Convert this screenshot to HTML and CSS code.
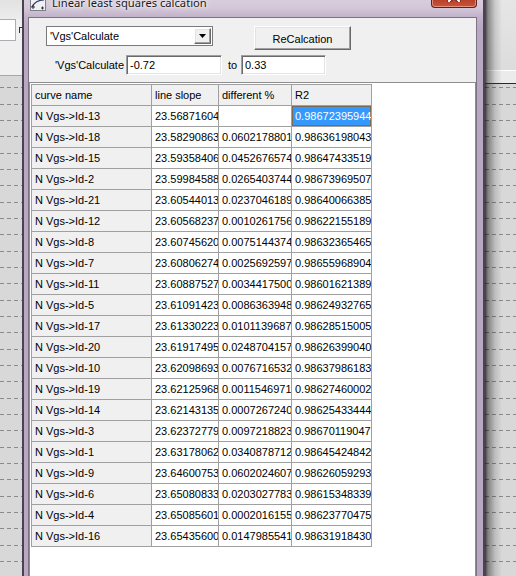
FILE: index.html
```html
<!DOCTYPE html>
<html>
<head>
<meta charset="utf-8">
<title>Linear least squares calcation</title>
<link rel="stylesheet" href="styles.css">
</head>
<body>
<div class="screen">
  <div class="desk-left">
    <div class="dl-top">
      <div class="dl-band"></div>
      <div class="dl-row">
        <div class="dl-field"></div>
        <div class="dl-mark"></div>
      </div>
    </div>
    <div class="dl-sep"></div>
    <div class="dashes dashes-left"></div>
  </div>

  <div class="window">
    <div class="titlebar">
      <svg class="app-icon" width="16" height="16" viewBox="0 0 16 16">
        <rect x="0.5" y="0.5" width="15" height="15" fill="#eef0f4" stroke="#7d7f88"/>
        <rect x="1" y="1" width="14" height="3" fill="#9aa6c4"/>
        <path d="M2 12 C5 6, 9 5, 14 5" fill="none" stroke="#2f3a66" stroke-width="1.2"/>
        <path d="M3 14 L3 10 M1 12 L5 12" stroke="#333" stroke-width="1"/>
        <path d="M11 13 L14 13 M12.5 11.5 L12.5 14.5" stroke="#333" stroke-width="1"/>
      </svg>
      <span class="title">Linear least squares calcation</span>
      <div class="close-btn">
        <svg width="14" height="12" viewBox="0 0 14 12">
          <path d="M2 1 L12 11 M12 1 L2 11" stroke="#5a1a12" stroke-width="4" stroke-linecap="square"/>
          <path d="M2 1 L12 11 M12 1 L2 11" stroke="#ffffff" stroke-width="2.2" stroke-linecap="square"/>
        </svg>
      </div>
    </div>

    <div class="client">
      <div class="row-top">
        <div class="combo">
          <span class="combo-text">'Vgs'Calculate</span>
          <span class="combo-btn">
            <svg width="8" height="5" viewBox="0 0 8 5"><path d="M0 0 H7 L3.5 4 Z" fill="#000"/></svg>
          </span>
        </div>
        <div class="btn">ReCalcation</div>
      </div>

      <div class="row-range">
        <span class="lbl">'Vgs'Calculate</span>
        <div class="field f1">-0.72</div>
        <span class="to">to</span>
        <div class="field f2">0.33</div>
      </div>

      <div class="grid-panel">
        <table class="grid">
          <colgroup><col class="c1"><col class="c2"><col class="c3"><col class="c4"></colgroup>
          <tr><td class="fx">curve name</td><td class="fx">line slope</td><td class="fx">different %</td><td class="fx">R2</td></tr>
          <tr><td class="fx">N Vgs-&gt;Id-13</td><td>23.56871604</td><td></td><td class="sel">0.98672395944</td></tr>
          <tr><td class="fx">N Vgs-&gt;Id-18</td><td>23.58290863</td><td>0.06021788013</td><td>0.98636198043</td></tr>
          <tr><td class="fx">N Vgs-&gt;Id-15</td><td>23.59358406</td><td>0.04526765741</td><td>0.98647433519</td></tr>
          <tr><td class="fx">N Vgs-&gt;Id-2</td><td>23.59984588</td><td>0.02654037441</td><td>0.98673969507</td></tr>
          <tr><td class="fx">N Vgs-&gt;Id-21</td><td>23.60544013</td><td>0.02370461896</td><td>0.98640066385</td></tr>
          <tr><td class="fx">N Vgs-&gt;Id-12</td><td>23.60568237</td><td>0.00102617562</td><td>0.98622155189</td></tr>
          <tr><td class="fx">N Vgs-&gt;Id-8</td><td>23.60745620</td><td>0.00751443741</td><td>0.98632365465</td></tr>
          <tr><td class="fx">N Vgs-&gt;Id-7</td><td>23.60806274</td><td>0.00256925971</td><td>0.98655968904</td></tr>
          <tr><td class="fx">N Vgs-&gt;Id-11</td><td>23.60887527</td><td>0.00344175001</td><td>0.98601621389</td></tr>
          <tr><td class="fx">N Vgs-&gt;Id-5</td><td>23.61091423</td><td>0.00863639481</td><td>0.98624932765</td></tr>
          <tr><td class="fx">N Vgs-&gt;Id-17</td><td>23.61330223</td><td>0.01011396871</td><td>0.98628515005</td></tr>
          <tr><td class="fx">N Vgs-&gt;Id-20</td><td>23.61917495</td><td>0.02487041571</td><td>0.98626399040</td></tr>
          <tr><td class="fx">N Vgs-&gt;Id-10</td><td>23.62098693</td><td>0.00767165321</td><td>0.98637986183</td></tr>
          <tr><td class="fx">N Vgs-&gt;Id-19</td><td>23.62125968</td><td>0.00115469711</td><td>0.98627460002</td></tr>
          <tr><td class="fx">N Vgs-&gt;Id-14</td><td>23.62143135</td><td>0.00072672401</td><td>0.98625433444</td></tr>
          <tr><td class="fx">N Vgs-&gt;Id-3</td><td>23.62372779</td><td>0.00972188231</td><td>0.98670119047</td></tr>
          <tr><td class="fx">N Vgs-&gt;Id-1</td><td>23.63178062</td><td>0.03408787121</td><td>0.98645424842</td></tr>
          <tr><td class="fx">N Vgs-&gt;Id-9</td><td>23.64600753</td><td>0.06020246071</td><td>0.98626059293</td></tr>
          <tr><td class="fx">N Vgs-&gt;Id-6</td><td>23.65080833</td><td>0.02030277831</td><td>0.98615348339</td></tr>
          <tr><td class="fx">N Vgs-&gt;Id-4</td><td>23.65085601</td><td>0.00020161551</td><td>0.98623770475</td></tr>
          <tr><td class="fx">N Vgs-&gt;Id-16</td><td>23.65435600</td><td>0.01479855411</td><td>0.98631918430</td></tr>
        </table>
      </div>
    </div>
  </div>

  <div class="desk-right">
    <div class="dr-top"></div>
    <div class="dr-hl"></div>
    <div class="dr-band"></div>
    <div class="dr-line"></div>
    <div class="dashes dashes-right"></div>
  </div>
</div>
</body>
</html>
```

FILE: styles.css
```css
* { box-sizing: border-box; margin: 0; padding: 0; }
html, body { width: 516px; height: 576px; overflow: hidden; background: #d8d8d8; }
body { font-family: "Liberation Sans", Arial, sans-serif; font-size: 11px; color: #000; }

.screen { display: flex; width: 516px; height: 576px; overflow: hidden; }

/* ---------- desktop / background window, left ---------- */
.desk-left { width: 22px; flex: none; display: flex; flex-direction: column; }
.dl-top { height: 75px; background: #f0f0f0; display: flex; flex-direction: column; }
.dl-band { height: 19px; background: linear-gradient(#e2e2e2, #ececec); }
.dl-row { height: 22px; display: flex; align-items: flex-start; }
.dl-field { width: 16px; height: 22px; background: #fff; border: 1px solid #abadb3; border-left: none; }
.dl-mark { width: 3px; height: 6px; margin: 8px 0 0 3px; border-left: 1px solid #333; border-top: 1px solid #333; }
.dl-sep { height: 1px; background: #a8a8a8; }

.dashes { flex: 1; }
.dashes-left {
  background:
    repeating-linear-gradient(to right, transparent 0 4px, #d8d8d8 4px 7px),
    linear-gradient(to bottom, #8a8a8a 0 1px, transparent 1px 17px, #8a8a8a 17px 18px, transparent 18px 33px, #8a8a8a 33px 34px, transparent 34px 49px) 0 11px / 100% 49px repeat,
    #d8d8d8;
}

/* ---------- desktop right with window shadow ---------- */
.desk-right { flex: 1; display: flex; flex-direction: column; }
.dr-top { height: 70px; background: linear-gradient(to right, rgba(0,0,0,.72), rgba(0,0,0,.4) 3px, rgba(0,0,0,.12) 10px, rgba(0,0,0,0) 17px), linear-gradient(#e6e6e6, #dcdcdc); }
.dr-hl { height: 1px; background: linear-gradient(to right, rgba(0,0,0,.72), rgba(0,0,0,.4) 3px, rgba(0,0,0,.12) 10px, rgba(0,0,0,0) 17px), #ffffff; }
.dr-band { height: 12px; background: linear-gradient(to right, rgba(0,0,0,.72), rgba(0,0,0,.4) 3px, rgba(0,0,0,.12) 10px, rgba(0,0,0,0) 17px), #ebebeb; }
.dr-line { height: 1px; background: #2a2a2a; }
.dashes-right {
  background:
    linear-gradient(to right, rgba(0,0,0,.72), rgba(0,0,0,.4) 3px, rgba(0,0,0,.12) 10px, rgba(0,0,0,0) 17px),
    repeating-linear-gradient(to right, transparent 0 4px, #d8d8d8 4px 7px),
    linear-gradient(to bottom, #8a8a8a 0 1px, transparent 1px 17px, #8a8a8a 17px 18px, transparent 18px 33px, #8a8a8a 33px 34px, transparent 34px 49px) 0 3px / 100% 49px repeat,
    #d8d8d8;
}

/* ---------- the dialog window ---------- */
.window {
  width: 463px; flex: none; height: 600px; margin-top: -12px;
  display: flex; flex-direction: column;
  border-left: 2px solid #4a4250; border-right: 2px solid #4a4250;
  padding: 0 6px 0 4px;
  background: linear-gradient(#e0d6e2 0, #d3c7d8 20px, #c2b2ca 29px, #baa8c3 40px);
}
.titlebar {
  height: 29px; margin: 0 -6px 0 -4px; padding-left: 6px;
  display: flex; align-items: flex-start;
}
.app-icon { margin-top: 7px; flex: none; }
.title {
  margin: 7px 0 0 6px; font-family: "Noto Sans", "Open Sans", sans-serif; font-size: 11.2px; line-height: 16px;
  color: #1a1a1a; text-shadow: 0 0 6px #fff, 0 0 3px #fff;
  white-space: nowrap;
}
.close-btn {
  margin-left: auto; margin-right: 6px; width: 46px; height: 20px; flex: none;
  border: 1px solid #5e2218; border-top: none; border-radius: 0 0 4px 4px;
  background: linear-gradient(#e2957f, #cf5a41 45%, #b73d26 55%, #c8553b);
  box-shadow: inset 0 0 0 1px rgba(255,210,200,.5);
  display: flex; align-items: center; justify-content: center;
}
.close-btn svg { margin-top: -4px; }

.client {
  flex: 1; background: #f0f0f0;
  border: 1px solid #7b7283; border-bottom: none;
  display: flex; flex-direction: column;
}

.row-top { display: flex; align-items: flex-start; margin-top: 8px; padding-left: 17px; }
.combo {
  width: 167px; height: 20px; background: #fff; border: 1px solid #7a7a7a;
  display: flex; align-items: center; justify-content: space-between; padding: 0 1px 0 3px;
}
.combo-text { line-height: 16px; }
.combo-btn {
  width: 17px; height: 16px; background: #f0f0f0;
  border: 1px solid; border-color: #fff #6a6a6a #6a6a6a #fff;
  box-shadow: inset -1px -1px 0 #a0a0a0, inset 1px 1px 0 #e3e3e3;
  display: flex; align-items: center; justify-content: center;
}
.btn {
  width: 97px; height: 24px; margin-left: 41px;
  background: #f0f0f0; border: 1px solid; border-color: #fff #696969 #696969 #fff;
  box-shadow: inset -1px -1px 0 #a0a0a0, inset 1px 1px 0 #e3e3e3;
  display: flex; align-items: center; justify-content: center; padding-top: 1px;
}

.row-range { display: flex; align-items: center; height: 20px; margin-top: 5px; padding-left: 26px; }
.lbl { width: 71px; }
.field {
  height: 20px; background: #fff; padding-left: 3px; line-height: 18px;
  border: 1px solid; border-color: #a0a0a0 #ffffff #ffffff #a0a0a0;
  box-shadow: inset 1px 1px 0 #696969, inset -1px -1px 0 #e3e3e3;
}
.f1 { width: 96px; }
.f2 { width: 85px; }
.to { width: 19px; padding-left: 6px; }

.grid-panel {
  flex: 1; margin-top: 7px; background: #fff;
  border: 1px solid #8e8e8e; border-bottom: none;
  padding: 1px 0 0 1px;
}
.grid {
  border-collapse: separate; border-spacing: 0; table-layout: fixed; width: 341px;
  border-top: 1px solid #a0a0a0; border-left: 1px solid #a0a0a0;
}
.c1 { width: 120px; } .c2 { width: 67px; } .c3 { width: 73px; } .c4 { width: 80px; }
.grid tr { height: 21px; }
.grid td {
  height: 21px; padding: 0 1px 0 3px; white-space: nowrap; overflow: hidden; text-overflow: clip;
  border-right: 1px solid #a0a0a0; border-bottom: 1px solid #a0a0a0; background: #fff;
  vertical-align: middle; line-height: 20px;
}
.grid td.fx { background: #f0f0f0; }
.grid td.sel { background: #3399ff; color: #fff; box-shadow: inset 0 0 0 1px #7b6a55; }
```
